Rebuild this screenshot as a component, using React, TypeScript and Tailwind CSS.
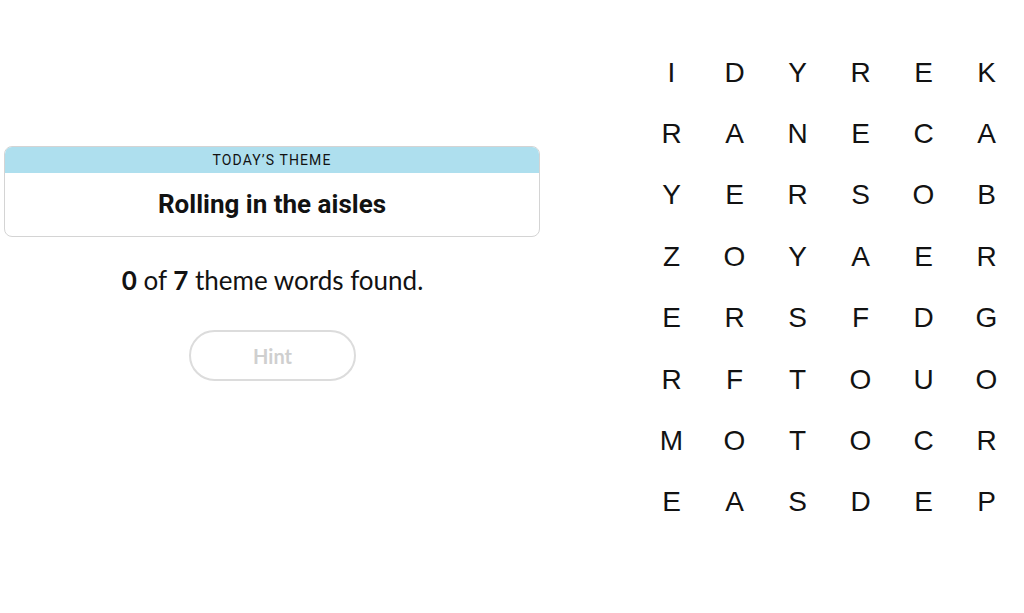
const GRID = [
  'IDYREK',
  'RANECA',
  'YERSOB',
  'ZOYAER',
  'ERSFDG',
  'RFTOUO',
  'MOTOCR',
  'EASDEP',
]

export default function App() {
  return (
    <div className="flex h-[613px] w-[1024px] bg-white text-black">
      {/* Left: theme + progress */}
      <div className="flex w-[545px] flex-col items-center pt-[146px]">
        <div className="ml-1 w-[536px] self-start overflow-hidden rounded-lg border border-[#d4d4d4]">
          <div
            className="flex h-[26px] items-center justify-center bg-[#aedfee] text-[14px] tracking-[0.08em] text-[#121212]"
            style={{ fontFamily: 'Roboto, "Liberation Sans", sans-serif' }}
          >
            TODAY’S THEME
          </div>
          <div
            className="flex h-[63px] items-center justify-center pb-[1px] text-[26px] font-bold text-[#121212]"
            style={{ fontFamily: 'Roboto, "Liberation Sans", sans-serif' }}
          >
            Rolling in the aisles
          </div>
        </div>

        <p
          className="mt-[27px] text-[26px] leading-[32px] text-[#121212]"
          style={{ fontFamily: 'Lato, "Open Sans", sans-serif' }}
        >
          <span className="font-bold">0</span> of <span className="font-bold">7</span> theme words found.
        </p>

        <button
          className="mt-[34px] h-[51px] w-[167px] rounded-full border-2 border-[#dcdcdc] bg-white text-[20px] font-bold text-[#cfcfcf]"
          style={{ fontFamily: 'Lato, "Open Sans", sans-serif' }}
        >
          Hint
        </button>
      </div>

      {/* Right: letter grid */}
      <div className="pl-[95px] pt-[42px]">
        <div
          className="grid grid-cols-[repeat(6,63px)] auto-rows-[61.4px] text-[28px] text-[#121212]"
          style={{ fontFamily: '"Liberation Sans", Arial, sans-serif' }}
        >
          {GRID.flatMap((row, r) =>
            row.split('').map((ch, c) => (
              <div key={`${r}-${c}`} className="flex items-center justify-center">
                {ch}
              </div>
            ))
          )}
        </div>
      </div>
    </div>
  )
}
